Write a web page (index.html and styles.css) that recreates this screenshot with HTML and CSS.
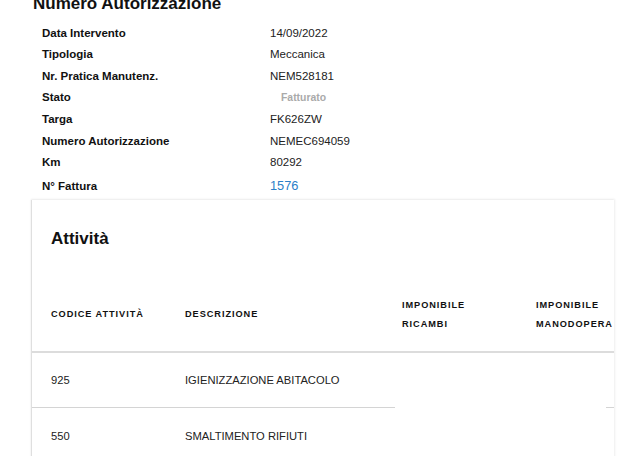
FILE: index.html
```html
<!DOCTYPE html>
<html lang="it">
<head>
<meta charset="utf-8">
<title>Numero Autorizzazione</title>
<link rel="stylesheet" href="styles.css">
</head>
<body>
<div class="page">
  <h1 class="title">Numero Autorizzazione</h1>
  <div class="details">
    <div class="row"><span class="label">Data Intervento</span><span class="value">14/09/2022</span></div>
    <div class="row"><span class="label">Tipologia</span><span class="value">Meccanica</span></div>
    <div class="row"><span class="label">Nr. Pratica Manutenz.</span><span class="value">NEM528181</span></div>
    <div class="row"><span class="label">Stato</span><span class="value"><span class="badge">Fatturato</span></span></div>
    <div class="row"><span class="label">Targa</span><span class="value">FK626ZW</span></div>
    <div class="row"><span class="label">Numero Autorizzazione</span><span class="value">NEMEC694059</span></div>
    <div class="row"><span class="label">Km</span><span class="value">80292</span></div>
    <div class="row row-last"><span class="label">N° Fattura</span><span class="value link">1576</span></div>
  </div>
  <div class="card">
    <h2 class="card-title">Attività</h2>
    <table class="table">
      <colgroup>
        <col class="c1"><col class="c2"><col class="c3"><col class="c4"><col class="c5">
      </colgroup>
      <thead>
        <tr>
          <th class="p-wide">Codice attività</th>
          <th class="p-wide">Descrizione</th>
          <th class="p-narrow">Imponibile<br>ricambi</th>
          <th class="p-narrow">Imponibile<br>manodopera</th>
          <th class="p-wide"></th>
        </tr>
      </thead>
      <tbody>
        <tr>
          <td class="p-wide line">925</td>
          <td class="p-wide line">IGIENIZZAZIONE ABITACOLO</td>
          <td class="p-narrow"></td>
          <td class="p-narrow"></td>
          <td class="p-wide line"></td>
        </tr>
        <tr>
          <td class="p-wide">550</td>
          <td class="p-wide">SMALTIMENTO RIFIUTI</td>
          <td class="p-narrow"></td>
          <td class="p-narrow"></td>
          <td class="p-wide"></td>
        </tr>
      </tbody>
    </table>
  </div>
</div>
</body>
</html>
```
FILE: styles.css
```css
html, body {
  margin: 0;
  padding: 0;
  background: #ffffff;
}
body {
  font-family: "Liberation Sans", Arial, Helvetica, sans-serif;
  color: #1a1a1a;
  overflow: hidden;
}
.page {
  width: 582px;
  margin-left: 32px;
}
.title {
  margin: -6px 0 0 1px;
  font-size: 17px;
  line-height: 20px;
  font-weight: 700;
  color: #111;
}
.details {
  margin: 8px 0 0 10px;
  display: flex;
  flex-direction: column;
}
.row {
  display: flex;
  align-items: center;
  height: 21.55px;
}
.row-last {
  height: 24px;
  padding-top: 1px;
}
.label {
  width: 228px;
  font-size: 11.5px;
  font-weight: 700;
  color: #111;
}
.value {
  font-size: 11.5px;
  color: #222;
}
.badge {
  display: inline-block;
  padding: 0 11px;
  font-size: 10.4px;
  font-weight: 700;
  color: #aaaaaa;
}
.link {
  font-size: 12.8px;
  color: #2a80c8;
}
.card {
  margin-top: 2px;
  background: #fff;
  box-shadow: 0 0 2px 1px rgba(0, 0, 0, 0.07), -1px 0 1px rgba(0, 0, 0, 0.08);
  overflow: hidden;
  height: 300px;
}
.card-title {
  margin: 0;
  padding: 29px 0 0 19px;
  font-size: 17px;
  line-height: 20px;
  font-weight: 700;
  color: #111;
}
.table {
  margin-top: 29px;
  border-collapse: collapse;
  table-layout: fixed;
  width: 680px;
}
.c1 { width: 134px; }
.c2 { width: 229px; }
.c3 { width: 134px; }
.c4 { width: 77px; }
.c5 { width: 106px; }
th {
  text-align: left;
  vertical-align: middle;
  font-size: 9.2px;
  line-height: 19px;
  letter-spacing: 0.95px;
  font-weight: 700;
  text-transform: uppercase;
  color: #111;
  white-space: nowrap;
  height: 38px;
  padding-top: 18px;
  padding-bottom: 17px;
  border-bottom: 2px solid #dcdcdc;
}
td {
  height: 56px;
  padding-top: 0;
  padding-bottom: 0;
  vertical-align: middle;
  font-size: 11.2px;
  color: #222;
  white-space: nowrap;
  box-sizing: border-box;
}
td.line {
  border-bottom: 1px solid #d4d4d4;
}
.p-wide { padding-left: 19px; padding-right: 0; }
.p-narrow { padding-left: 7px; padding-right: 0; }
```
